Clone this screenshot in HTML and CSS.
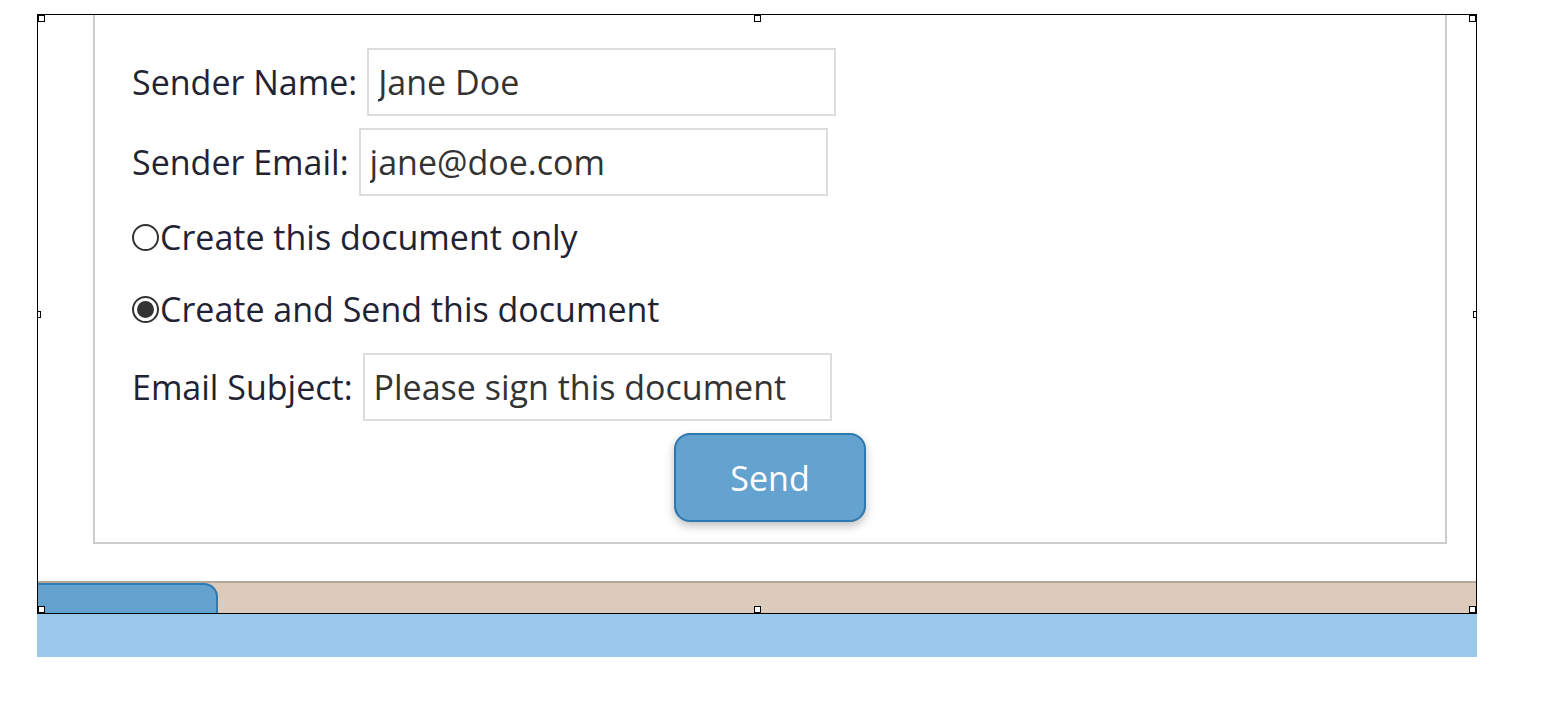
FILE: index.html
```html
<!DOCTYPE html>
<html lang="en">
<head>
    <meta charset="UTF-8">
    <meta name="viewport" content="width=device-width, initial-scale=1.0">
    <title>Send Document</title>
    <link rel="stylesheet" href="styles.css">
</head>
<body>
    <div class="frame">
        <div class="panel">
            <form id="sendForm">
                <div class="field">
                    <label for="senderName">Sender Name:</label>
                    <input type="text" id="senderName" value="Jane Doe">
                </div>
                <div class="field">
                    <label for="senderEmail">Sender Email:</label>
                    <input type="text" id="senderEmail" value="jane@doe.com">
                </div>
                <div class="option first">
                    <input type="radio" name="mode" id="createOnly">
                    <label for="createOnly">Create this document only</label>
                </div>
                <div class="option">
                    <input type="radio" name="mode" id="createSend" checked>
                    <label for="createSend">Create and Send this document</label>
                </div>
                <div class="field subject">
                    <label for="emailSubject">Email Subject:</label>
                    <input type="text" id="emailSubject" value="Please sign this document">
                </div>
                <div class="actions">
                    <button type="button" class="send">Send</button>
                </div>
            </form>
        </div>
        <div class="tabbar">
            <div class="tab"></div>
        </div>

        <span class="handle h-tl"></span>
        <span class="handle h-tm"></span>
        <span class="handle h-tr"></span>
        <span class="handle h-ml"></span>
        <span class="handle h-mr"></span>
        <span class="handle h-bl"></span>
        <span class="handle h-bm"></span>
        <span class="handle h-br"></span>
    </div>
    <div class="band"></div>
</body>
</html>
```

FILE: styles.css
```css
body {
    margin: 0;
    font-family: "Open Sans", "Noto Sans", sans-serif;
    background-color: #fff;
    color: #1f2333;
}

.frame {
    position: relative;
    margin: 14px 0 0 37px;
    width: 1438px;
    height: 598px;
    border: 1px solid #000;
    overflow: hidden;
    display: flex;
    flex-direction: column;
}

.panel {
    margin: -10px 29px 0 55px;
    height: 539px;
    border: 2px solid #ccc;
    padding: 41px 0 0 37px;
    box-sizing: border-box;
}

.field {
    display: flex;
    align-items: center;
    height: 68px;
    margin-bottom: 12px;
}

.field label {
    font-size: 34px;
    margin-right: 10px;
}

.field input {
    width: 469px;
    height: 68px;
    box-sizing: border-box;
    border: 2px solid #ddd;
    padding: 0 9px;
    font-family: inherit;
    font-size: 34px;
    color: #333;
    outline: none;
}

.option {
    display: flex;
    align-items: center;
    height: 72px;
    font-size: 34px;
}

.option.first {
    margin-top: -7px;
}

.option input[type="radio"] {
    appearance: none;
    -webkit-appearance: none;
    width: 27px;
    height: 27px;
    margin: 0 1px 0 0;
    border: 2px solid #333;
    border-radius: 50%;
    box-sizing: border-box;
    position: relative;
}

.option input[type="radio"]:checked::after {
    content: "";
    position: absolute;
    left: 3px;
    top: 3px;
    width: 17px;
    height: 17px;
    border-radius: 50%;
    background-color: #333;
}

.subject {
    margin-top: 8px;
}

.actions {
    display: flex;
    justify-content: center;
    margin-left: -37px;
}

.send {
    width: 192px;
    height: 89px;
    border: 2px solid #2e78b0;
    border-radius: 16px;
    background-color: #64a2cf;
    color: #fff;
    font-family: inherit;
    font-size: 34px;
    box-shadow: 0 4px 10px rgba(0, 0, 0, 0.25);
}

.tabbar {
    margin-top: auto;
    height: 32px;
    background-color: #dccbbb;
    border-top: 2px solid #b3a69a;
    box-sizing: border-box;
}

.tab {
    width: 180px;
    height: 30px;
    background-color: #63a2cf;
    border-top: 2px solid #2f7ab0;
    border-right: 2px solid #2f7ab0;
    border-top-right-radius: 14px;
    box-sizing: border-box;
}

.band {
    margin-left: 37px;
    width: 1440px;
    height: 43px;
    background-color: #9ac9ec;
}

/* selection handles */
.handle {
    position: absolute;
    width: 5px;
    height: 5px;
    border: 1px solid #000;
    background: #fff;
}

.h-tl { left: 0; top: 0; }
.h-tm { left: 716px; top: 0; }
.h-tr { right: 0; top: 0; }
.h-ml { left: -4px; top: 296px; }
.h-mr { right: -4px; top: 296px; }
.h-bl { left: 0; bottom: 0; }
.h-bm { left: 716px; bottom: 0; }
.h-br { right: 0; bottom: 0; }
```
